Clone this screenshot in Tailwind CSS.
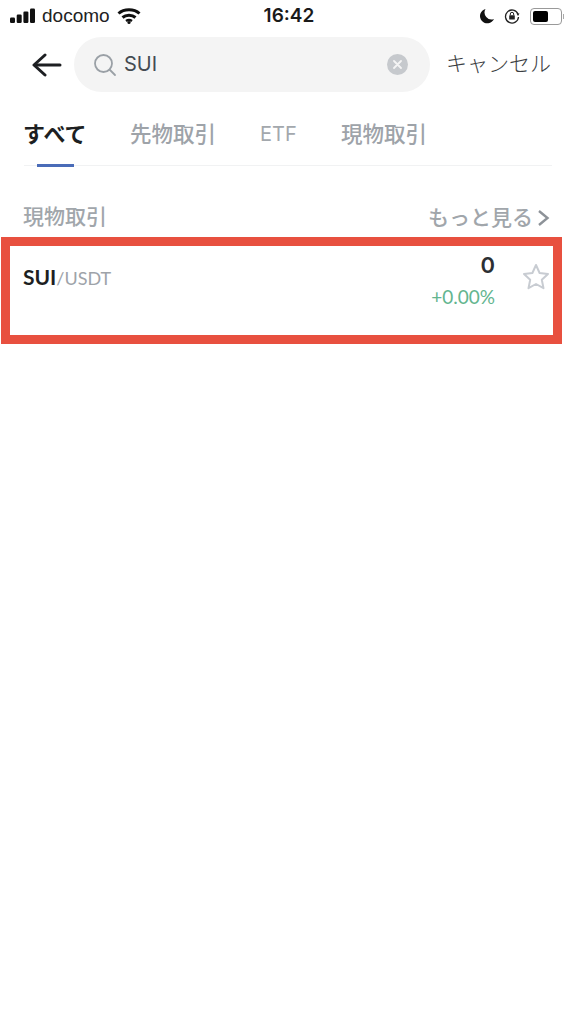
<!DOCTYPE html>
<html lang="ja">

<head>
    <meta charset="UTF-8">
    <meta name="viewport" content="width=device-width, initial-scale=1.0">
    <title>SUI search</title>
    <script src="https://cdn.jsdelivr.net/npm/@tailwindcss/browser@4"></script>
</head>

<body class="bg-white">
    <div class="w-[576px] h-[1024px] overflow-hidden bg-white font-['Inter','Noto_Sans_CJK_JP',sans-serif]">
        <!-- status bar -->
        <div class="h-[37px] pt-[5px] pl-[10px] pr-[12px] grid grid-cols-3 items-start text-[#111]">
            <div class="flex items-center h-[22px] whitespace-nowrap">
                <svg width="26" height="16" viewBox="0 0 26 16" fill="#111">
                    <rect x="0" y="9.5" width="5" height="5.5" rx="1.2" />
                    <rect x="6.7" y="6.5" width="5" height="8.5" rx="1.2" />
                    <rect x="13.4" y="3.5" width="5" height="11.5" rx="1.2" />
                    <rect x="20" y="0.5" width="5" height="14.5" rx="1.2" />
                </svg>
                <span class="ml-[6px] text-[19px] leading-[22px] text-[#222] font-['Liberation_Sans',sans-serif]">docomo</span>
                <svg class="ml-[7px]" width="24" height="18" viewBox="0 0 24 18" fill="none" stroke="#111" stroke-width="3">
                    <path d="M1.5 6.5 C7 1.5 17 1.5 22.5 6.5" />
                    <path d="M5.5 10.5 C9 7.5 15 7.5 18.5 10.5" />
                    <path d="M9 14 C10.8 12.8 13.2 12.8 15 14" stroke-width="2.5" />
                    <circle cx="12" cy="15.5" r="1.6" fill="#111" stroke="none" />
                </svg>
            </div>
            <div class="text-center text-[19px] leading-[22px] font-semibold text-[#1a1a1a] pl-[4px]">16:42</div>
            <div class="flex items-center justify-end h-[22px]">
                <svg width="16" height="16" viewBox="0 0 16 16" fill="#111">
                    <path d="M6.5 1 A7.3 7.3 0 1 0 15 11 A7 7 0 0 1 6.5 1 Z" />
                </svg>
                <svg class="ml-[9px]" width="16" height="16" viewBox="0 0 16 16" fill="none" stroke="#222" stroke-width="1.3">
                    <path d="M14 6 A6.5 6.5 0 1 0 14.5 9" />
                    <path d="M12.5 5.5 L15.5 5.5 L14 8 Z" fill="#222" stroke="none" />
                    <rect x="5.2" y="7.2" width="5.6" height="4.3" rx="0.6" fill="#222" stroke="none" />
                    <path d="M6.3 7.2 V6 A1.7 1.7 0 0 1 9.7 6 V7.2" stroke-width="1" />
                </svg>
                <div class="ml-[10px] w-[32px] h-[17px] border border-[#999] rounded-[4px] p-[2px]">
                    <div class="w-[15px] h-full bg-black rounded-[2px]"></div>
                </div>
                <div class="ml-[1px] w-[1px] h-[5px] bg-[#aaa]"></div>
            </div>
        </div>

        <!-- search row -->
        <div class="flex items-center h-[55px] pl-[32px]">
            <svg width="30" height="26" viewBox="0 0 30 26" fill="none" stroke="#1d1f22" stroke-width="3" stroke-linecap="round" stroke-linejoin="round">
                <path d="M28 13 H3" />
                <path d="M13 3 L2 13 L13 23" />
            </svg>
            <div class="ml-[12px] w-[356px] h-[55px] rounded-[28px] bg-[#f4f4f4] flex items-center pl-[19px] pr-[22px]">
                <svg width="24" height="24" viewBox="0 0 24 24" fill="none" stroke="#9aa0a6" stroke-width="1.8" stroke-linecap="round">
                    <circle cx="10.5" cy="10.5" r="8.5" />
                    <path d="M17 17 L22 22" />
                </svg>
                <span class="ml-[7px] mb-[2px] text-[20px] text-[#444b52]">SUI</span>
                <div class="ml-auto w-[21px] h-[21px] rounded-full bg-[#c6c9cd] flex items-center justify-center">
                    <svg width="9" height="9" viewBox="0 0 9 9" stroke="#f4f4f4" stroke-width="1.8" stroke-linecap="round">
                        <path d="M1 1 L8 8 M8 1 L1 8" />
                    </svg>
                </div>
            </div>
            <span class="ml-[16px] mb-[2px] text-[21px] leading-none text-[#3a3d42] font-light whitespace-nowrap">キャンセル</span>
        </div>

        <!-- tabs -->
        <div class="mt-[18px] ml-[24px] w-[528px] h-[56px] border-b border-[#f1f2f3] flex items-start">
            <div class="relative h-[56px] w-[106px]">
                <span class="block -ml-[1px] text-[22px] leading-[48px] font-bold text-[#1d1f22]">すべて</span>
                <div class="absolute left-[13px] bottom-[-1px] w-[37px] h-[3px] bg-[#4a6cb8]"></div>
            </div>
            <span class="w-[130px] text-[21.5px] leading-[48px] font-medium text-[#9ea3a9]">先物取引</span>
            <span class="w-[81px] text-[20px] leading-[48px] text-[#a3a8ad]">ETF</span>
            <span class="text-[21.5px] leading-[48px] font-medium text-[#9ea3a9]">現物取引</span>
        </div>

        <!-- section header -->
        <div class="mt-[34px] ml-[23px] w-[527px] h-[36px] flex items-center justify-between text-[#a1a6ab]">
            <span class="mb-[3px] text-[21px] leading-none font-medium">現物取引</span>
            <div class="flex items-center mb-[1px]">
                <span class="text-[21px] leading-none font-medium">もっと見る</span>
                <svg class="ml-[4px]" width="13" height="18" viewBox="0 0 13 18" fill="none" stroke="#8d9298" stroke-width="2.4">
                    <path d="M2 2 L10.5 9 L2 16" />
                </svg>
            </div>
        </div>

        <!-- highlighted row -->
        <div class="mt-[1px] ml-[1px] w-[561px] h-[107px] border-[9px] border-[#e8503f] flex items-start pl-[13px] pr-[3px]">
            <div class="mt-[17px] text-[18px] leading-[28px] font-['Lato',sans-serif]">
                <span class="font-bold text-[21px] text-[#1d1f22]">SUI</span><span class="text-[#9ea3a9]">/USDT</span>
            </div>
            <div class="ml-auto mt-[3px] mr-[1px] text-right">
                <div class="text-[22px] leading-[32px] font-semibold text-[#2c2f33]">0</div>
                <div class="mt-[1px] text-[19px] leading-[30px] text-[#63b58f] font-['Lato',sans-serif]">+0.00%</div>
            </div>
            <svg class="ml-[26px] mt-[17px]" width="28" height="27" viewBox="0 0 28 27" fill="none" stroke="#c8ccd2" stroke-width="2" stroke-linejoin="round">
                <path d="M14 2 L17.6 10 L26 11 L19.8 16.8 L21.5 25.2 L14 21 L6.5 25.2 L8.2 16.8 L2 11 L10.4 10 Z" />
            </svg>
        </div>
    </div>
</body>

</html>
